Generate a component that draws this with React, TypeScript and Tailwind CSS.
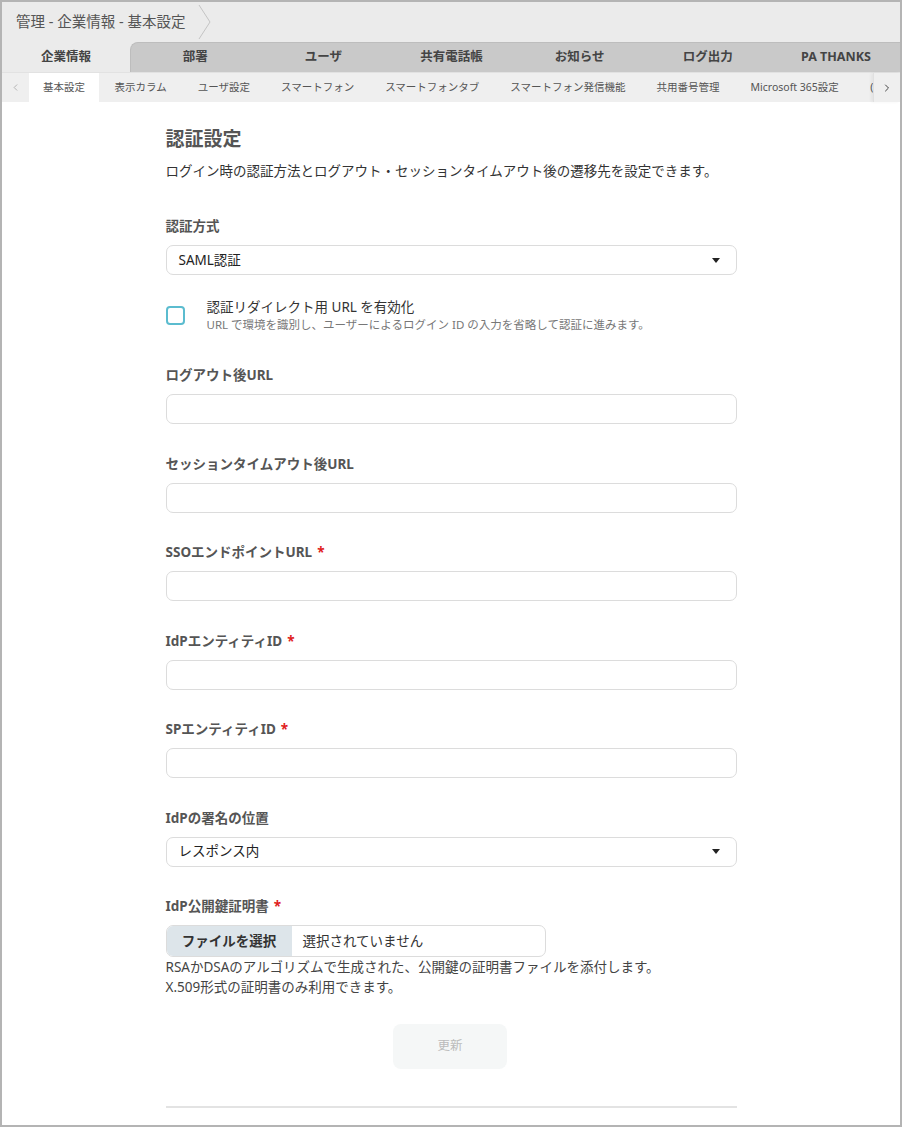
import { ChevronLeft, ChevronRight } from "lucide-react";

const mainTabs = ["企業情報", "部署", "ユーザ", "共有電話帳", "お知らせ", "ログ出力", "PA THANKS"];
const subTabs = [
	"基本設定",
	"表示カラム",
	"ユーザ設定",
	"スマートフォン",
	"スマートフォンタブ",
	"スマートフォン発信機能",
	"共用番号管理",
	"Microsoft 365設定",
];

const Caret = () => (
	<svg width="8" height="5" viewBox="0 0 8 5" className="shrink-0">
		<path d="M0 0h8L4 5z" fill="#222" />
	</svg>
);

const Label = ({ text, required }: { text: string; required?: boolean }) => (
	<div className="text-[13.5px] font-bold text-[#555] leading-[18px] mb-[10px]">
		{text}
		{required && <span className="text-[#e02020] ml-[5px]">*</span>}
	</div>
);

const TextField = ({ label, required, first }: { label: string; required?: boolean; first?: boolean }) => (
	<div className={first ? "mt-[33px]" : "mt-[30.5px]"}>
		<Label text={label} required={required} />
		<div className="h-[30px] rounded-[7px] border border-[#dcdcdc] bg-white" />
	</div>
);

const Select = ({ value }: { value: string }) => (
	<div className="h-[30px] rounded-[7px] border border-[#dcdcdc] bg-white flex items-center justify-between pl-[12px] pr-[16px]">
		<span className="text-[13.5px] text-[#222]">{value}</span>
		<Caret />
	</div>
);

export default function App() {
	return (
		<div
			className="w-[902px] h-[1127px] border-2 border-[#b4b4b4] bg-white overflow-hidden flex flex-col"
			style={{ fontFamily: '"Noto Sans", "Noto Sans CJK JP", sans-serif' }}
		>
			{/* breadcrumb */}
			<div className="h-[40px] bg-[#ebebeb] flex items-center pl-[14px] shrink-0">
				<span className="text-[14.5px] text-[#555]">管理 - 企業情報 - 基本設定</span>
				<svg width="14" height="36" viewBox="0 0 14 36" className="ml-[13px]">
					<path d="M1 1l11 17L1 35" fill="none" stroke="#c4c4c4" strokeWidth="1" />
				</svg>
			</div>

			{/* main tabs */}
			<div className="h-[30px] bg-[#ebebeb] flex shrink-0">
				{mainTabs.map((t, i) => (
					<div
						key={t}
						className={
							i === 0
								? "flex-1 flex items-center justify-center text-[12.5px] font-bold text-[#444] bg-[#ebebeb]"
								: i === 1
									? "flex-1 flex items-center justify-center text-[12.5px] font-bold text-[#444] bg-[#c9c9c9] rounded-tl-[8px] border-t border-l border-[#bdbdbd]"
									: "flex-1 flex items-center justify-center text-[12.5px] font-bold text-[#444] bg-[#c9c9c9] border-t border-[#bdbdbd]"
						}
					>
						{t}
					</div>
				))}
			</div>

			{/* sub tabs */}
			<div className="h-[30px] bg-[#efefef] flex items-stretch shrink-0 border-t border-[#e2e2e2]">
				<div className="w-[27px] flex items-center justify-center text-[#999]">
					<ChevronLeft size={11} strokeWidth={1.5} />
				</div>
				<div className="flex-1 flex items-stretch overflow-hidden">
					{subTabs.map((t, i) => (
						<div
							key={t}
							className={
								i === 0
									? "px-[14px] flex items-center text-[10.5px] text-[#555] bg-white whitespace-nowrap"
									: "px-[15.5px] flex items-center text-[10.5px] text-[#555] whitespace-nowrap"
							}
						>
							{t}
						</div>
					))}
					<div className="pl-[16px] flex items-center text-[10.5px] text-[#555]">(</div>
				</div>
				<div className="w-[27px] flex items-center justify-center text-[#444] border-l border-[#e0e0e0] shadow-[-2px_0_3px_rgba(0,0,0,0.05)]">
					<ChevronRight size={12} strokeWidth={2} />
				</div>
			</div>

			{/* content */}
			<div className="flex-1 flex justify-center">
				<div className="w-[571px] pt-[24px]">
					<h1 className="text-[19px] font-bold text-[#555] leading-[26px]">認証設定</h1>
					<p className="text-[13.5px] text-[#333] mt-[9px] leading-[20px]">
						ログイン時の認証方法とログアウト・セッションタイムアウト後の遷移先を設定できます。
					</p>

					<div className="mt-[36px]">
						<Label text="認証方式" />
						<Select value="SAML認証" />
					</div>

					<div className="flex mt-[23px]">
						<div className="w-[19px] h-[19px] rounded-[4px] border-2 border-[#5bbccf] mt-[8px] shrink-0" />
						<div className="ml-[22px]">
							<div className="text-[13.5px] text-[#333] leading-[18px]">認証リダイレクト用 URL を有効化</div>
							<div className="text-[11.5px] text-[#777] leading-[16px] mt-[1px]">
								URL で環境を識別し、ユーザーによるログイン ID の入力を省略して認証に進みます。
							</div>
						</div>
					</div>

					<TextField label="ログアウト後URL" first />
					<TextField label="セッションタイムアウト後URL" />
					<TextField label="SSOエンドポイントURL" required />
					<TextField label="IdPエンティティID" required />
					<TextField label="SPエンティティID" required />

					<div className="mt-[30.5px]">
						<Label text="IdPの署名の位置" />
						<Select value="レスポンス内" />
					</div>

					<div className="mt-[30.5px]">
						<Label text="IdP公開鍵証明書" required />
						<div className="w-[380px] h-[32px] rounded-[7px] border border-[#dcdcdc] flex overflow-hidden">
							<div className="w-[125px] bg-[#dde5ea] flex items-center justify-center text-[13.5px] font-bold text-[#333]">
								ファイルを選択
							</div>
							<div className="flex items-center pl-[11px] text-[13.5px] text-[#333]">選択されていません</div>
						</div>
						<div className="text-[13.5px] text-[#444] leading-[20px]">
							<div>RSAかDSAのアルゴリズムで生成された、公開鍵の証明書ファイルを添付します。</div>
							<div>X.509形式の証明書のみ利用できます。</div>
						</div>
					</div>

					<div className="flex justify-center mt-[27px]">
						<div className="w-[114px] h-[45px] rounded-[8px] bg-[#f5f7f7] flex items-center justify-center text-[12.5px] text-[#bbb] ml-[-2px]">
							更新
						</div>
					</div>

					<div className="border-t-2 border-[#e3e3e3] mt-[37px]" />
				</div>
			</div>
		</div>
	);
}
